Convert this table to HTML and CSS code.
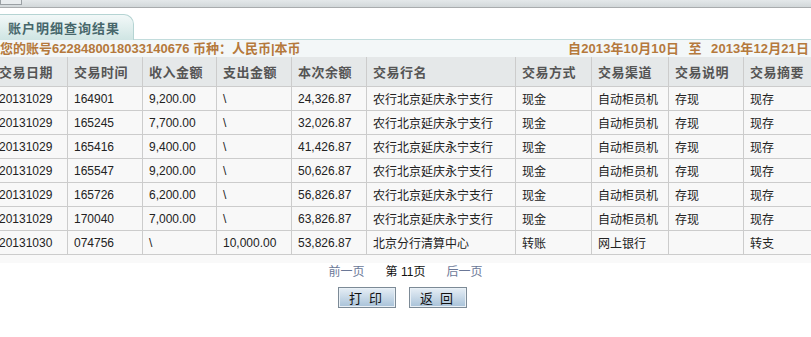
FILE: index.html
```html
<!DOCTYPE html>
<html lang="zh-CN">
<head>
<meta charset="utf-8">
<title>账户明细查询结果</title>
<link rel="stylesheet" href="styles.css">
</head>
<body>
<div class="page">
  <div class="topbar">
    <span class="topbox"></span>
  </div>
  <div class="tabline">
    <div class="tab">账户明细查询结果</div>
  </div>
  <div class="acct">
    <span>您的账号6228480018033140676 币种：人民币|本币</span>
    <span class="range">自2013年10月10日&nbsp;&nbsp;至&nbsp;&nbsp;2013年12月21日</span>
  </div>
  <div class="tablewrap">
    <table class="grid">
      <colgroup>
        <col class="c75"><col class="c75"><col class="c74"><col class="c75"><col class="c75">
        <col class="c149"><col class="c76"><col class="c77"><col class="c75"><col class="c75">
      </colgroup>
      <thead>
        <tr><th>交易日期</th><th>交易时间</th><th>收入金额</th><th>支出金额</th><th>本次余额</th><th>交易行名</th><th>交易方式</th><th>交易渠道</th><th>交易说明</th><th>交易摘要</th></tr>
      </thead>
      <tbody>
        <tr><td>20131029</td><td>164901</td><td>9,200.00</td><td>\</td><td>24,326.87</td><td>农行北京延庆永宁支行</td><td>现金</td><td>自动柜员机</td><td>存现</td><td>现存</td></tr>
        <tr><td>20131029</td><td>165245</td><td>7,700.00</td><td>\</td><td>32,026.87</td><td>农行北京延庆永宁支行</td><td>现金</td><td>自动柜员机</td><td>存现</td><td>现存</td></tr>
        <tr><td>20131029</td><td>165416</td><td>9,400.00</td><td>\</td><td>41,426.87</td><td>农行北京延庆永宁支行</td><td>现金</td><td>自动柜员机</td><td>存现</td><td>现存</td></tr>
        <tr><td>20131029</td><td>165547</td><td>9,200.00</td><td>\</td><td>50,626.87</td><td>农行北京延庆永宁支行</td><td>现金</td><td>自动柜员机</td><td>存现</td><td>现存</td></tr>
        <tr><td>20131029</td><td>165726</td><td>6,200.00</td><td>\</td><td>56,826.87</td><td>农行北京延庆永宁支行</td><td>现金</td><td>自动柜员机</td><td>存现</td><td>现存</td></tr>
        <tr><td>20131029</td><td>170040</td><td>7,000.00</td><td>\</td><td>63,826.87</td><td>农行北京延庆永宁支行</td><td>现金</td><td>自动柜员机</td><td>存现</td><td>现存</td></tr>
        <tr><td>20131030</td><td>074756</td><td>\</td><td>10,000.00</td><td>53,826.87</td><td>北京分行清算中心</td><td>转账</td><td>网上银行</td><td></td><td>转支</td></tr>
      </tbody>
    </table>
  </div>
  <div class="band"></div>
  <div class="pager">
    <a class="plink">前一页</a>
    <span class="pcur">第 11页</span>
    <a class="plink">后一页</a>
  </div>
  <div class="actions">
    <button class="btn">打 印</button>
    <button class="btn">返 回</button>
  </div>
</div>
</body>
</html>
```

FILE: styles.css
```css
html, body {
  margin: 0;
  padding: 0;
  background: #ffffff;
}
body {
  font-family: "Liberation Sans", Arial, "Noto Sans CJK SC", sans-serif;
  font-size: 12px;
  color: #222;
}
.page {
  width: 811px;
  height: 337px;
  overflow: hidden;
}
.topbar {
  height: 7px;
  border-bottom: 1px solid #a9acae;
  background: linear-gradient(#e4e8ea, #d2d8da);
  position: relative;
  overflow: hidden;
}
.topbox {
  position: absolute;
  left: 0;
  top: -6px;
  width: 20px;
  height: 9px;
  border: 1px solid #9aa0a4;
  background: #e8ecee;
}
.tabline {
  height: 31px;
  display: flex;
  align-items: flex-end;
  border-bottom: 1px solid #c2dcdc;
}
.tab {
  width: 125px;
  height: 25px;
  margin-bottom: -1px;
  padding-left: 8px;
  border: 1px solid #b5d4d3;
  border-left: none;
  border-bottom: none;
  border-top-right-radius: 10px;
  background: linear-gradient(#f2f8f8, #cfe5e3);
  font-family: "Noto Sans CJK SC", sans-serif;
  font-size: 13px;
  font-weight: bold;
  letter-spacing: 1px;
  color: #47676b;
  line-height: 25px;
}
.acct {
  height: 17px;
  display: flex;
  justify-content: space-between;
  align-items: center;
  background: #f3f7f8;
  font-family: "Liberation Sans", Arial, "Noto Sans CJK SC", sans-serif;
  font-weight: bold;
  font-size: 13px;
  color: #b5793c;
  line-height: 17px;
  white-space: nowrap;
  padding-right: 2px;
}
.range {
  word-spacing: 1px;
  letter-spacing: 0.1px;
}
.tablewrap {
  margin-left: -8px;
}
.grid {
  border-collapse: collapse;
  table-layout: fixed;
  width: 826px;
}
.c75 { width: 75px; }
.c74 { width: 74px; }
.c76 { width: 76px; }
.c77 { width: 77px; }
.c149 { width: 149px; }
.grid th, .grid td {
  border: 1px solid #cccccc;
  padding: 0 0 0 6px;
  text-align: left;
  white-space: nowrap;
  overflow: hidden;
}
.grid th {
  height: 29px;
  background: #e5e8e9;
  color: #555;
  font-family: "Noto Sans CJK SC", sans-serif;
  font-size: 13px;
  font-weight: bold;
  letter-spacing: 0.5px;
  border-top: none;
}
.grid td {
  height: 23px;
  background: #f8f8f8;
  color: #222;
  font-size: 12px;
}
.band {
  height: 8px;
  background: #f9f9f9;
}
.pager {
  display: flex;
  justify-content: center;
  gap: 21px;
  margin-top: 1px;
  height: 17px;
  line-height: 17px;
  font-size: 12px;
  font-family: "Liberation Sans", Arial, "Noto Sans CJK SC", sans-serif;
}
.plink {
  color: #6b7897;
  cursor: pointer;
}
.pcur {
  color: #111;
}
.actions {
  display: flex;
  justify-content: center;
  gap: 13px;
  margin-top: 6px;
  padding-right: 7px;
}
.btn {
  width: 58px;
  height: 21px;
  padding: 0;
  border: 1px solid #7c8a96;
  box-shadow: inset 0 0 0 1px #e9f0f6;
  background: linear-gradient(#e6eef5, #a8c2d9);
  font-family: "Noto Sans CJK SC", sans-serif;
  font-size: 13px;
  letter-spacing: 2px;
  color: #111;
  line-height: 19px;
}
```
